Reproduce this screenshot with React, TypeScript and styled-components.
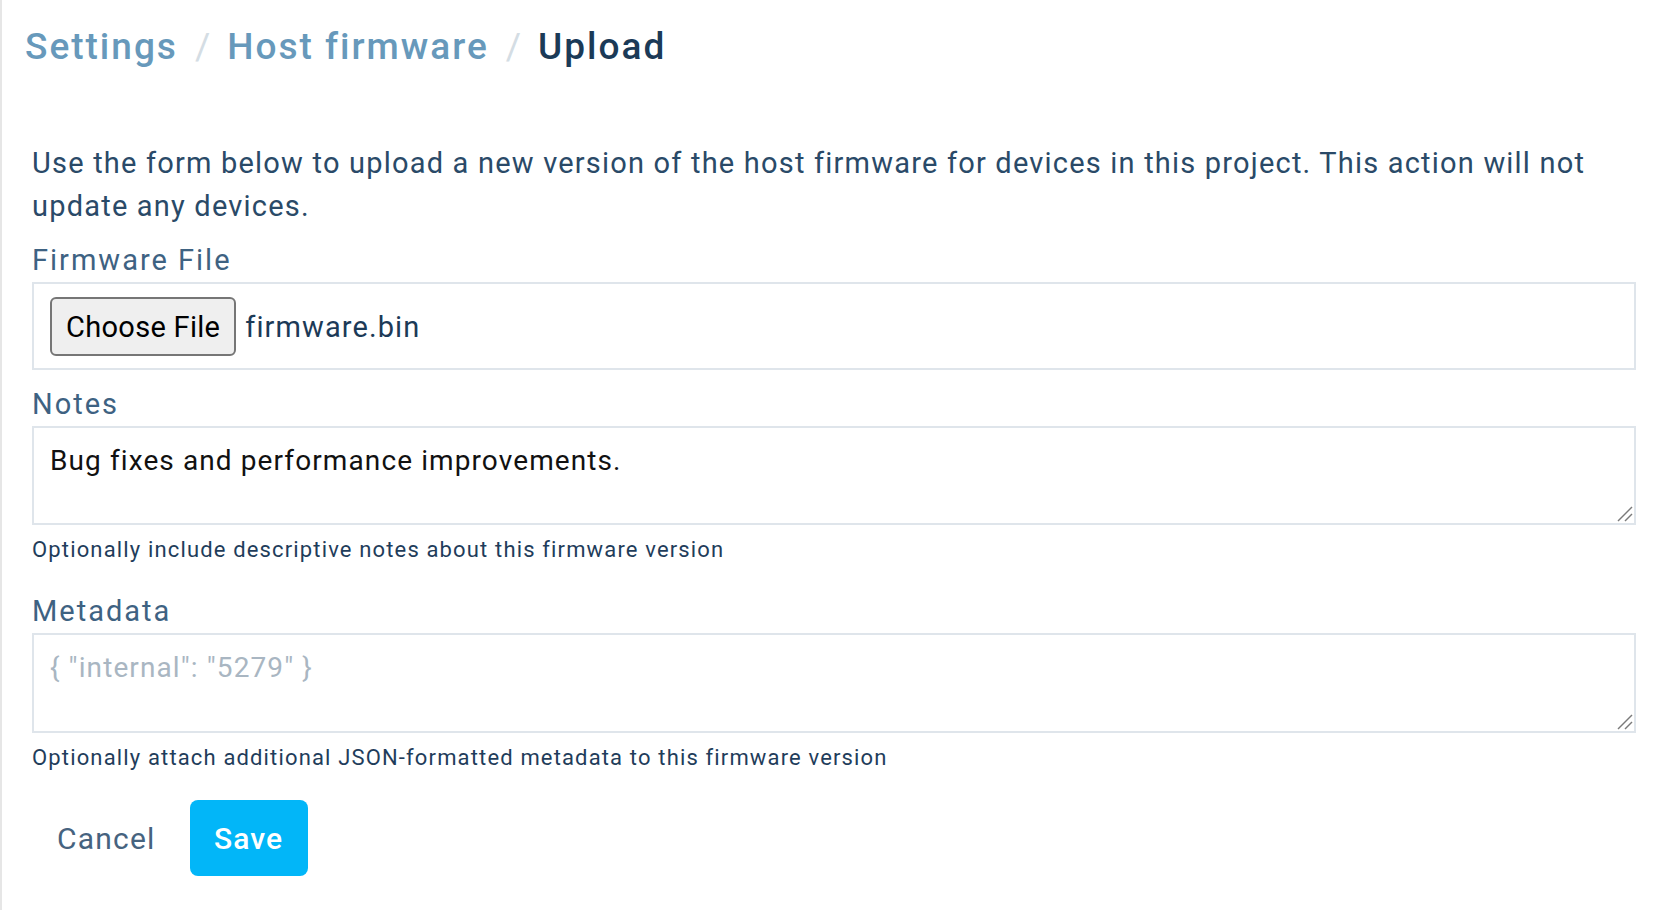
import React from "react";
import styled, { createGlobalStyle } from "styled-components";

const GlobalStyle = createGlobalStyle`
  html, body {
    margin: 0;
    padding: 0;
    background: #ffffff;
  }
  body {
    font-family: Roboto, "Liberation Sans", sans-serif;
    -webkit-font-smoothing: antialiased;
  }
  * { box-sizing: border-box; }
`;

const Page = styled.div`
  min-height: 100vh;
  border-left: 2px solid #e6e6e6;
`;

const Breadcrumb = styled.nav`
  display: flex;
  align-items: baseline;
  padding: 25px 24px 0 23px;
  font-size: 37px;
  line-height: 44px;
  font-weight: 500;
  letter-spacing: 2px;
`;

const Crumb = styled.span<{ $current?: boolean }>`
  color: ${(p) => (p.$current ? "#1b3a57" : "#6799bb")};
`;

const Slash = styled.span`
  color: #d4dde4;
  font-weight: 400;
  margin: 0 15px 0 17px;
`;

const Form = styled.form`
  display: flex;
  flex-direction: column;
  padding: 73px 20px 40px 30px;
`;

const Intro = styled.p`
  margin: 0 0 14px 0;
  font-size: 29px;
  line-height: 43px;
  color: #2a4a68;
  letter-spacing: 1.2px;
`;

const Field = styled.div<{ $gap?: number }>`
  display: flex;
  flex-direction: column;
  margin-top: ${(p) => p.$gap ?? 0}px;
`;

const Label = styled.label`
  display: block;
  font-size: 29px;
  line-height: 36px;
  color: #3e6282;
  letter-spacing: 2px;
  margin-bottom: 4px;
`;

const FileBox = styled.div`
  display: flex;
  align-items: center;
  gap: 9px;
  border: 2px solid #dfe5eb;
  padding: 13px 16px 12px 16px;
  background: #fff;
`;

const ChooseButton = styled.button`
  height: 59px;
  padding: 0 14px;
  border: 2px solid #767676;
  border-radius: 6px;
  background: #efefef;
  color: #000;
  font-family: Roboto, "Liberation Sans", sans-serif;
  font-size: 29px;
  letter-spacing: 0.3px;
`;

const FileName = styled.span`
  font-size: 29px;
  color: #1c3a57;
  letter-spacing: 1.1px;
`;

const AreaWrap = styled.div`
  position: relative;
  display: flex;
`;

const TextArea = styled.textarea<{ $h: number }>`
  width: 100%;
  height: ${(p) => p.$h}px;
  border: 2px solid #dfe5eb;
  padding: 12px 16px;
  font-family: Roboto, "Liberation Sans", sans-serif;
  font-size: 28px;
  line-height: 42px;
  letter-spacing: 1.1px;
  color: #111;
  resize: none;
  outline: none;
  background: #fff;
  &::placeholder {
    color: #a9b6c2;
  }
`;

const Grip = styled.svg`
  position: absolute;
  right: 3px;
  bottom: 3px;
  width: 16px;
  height: 16px;
  pointer-events: none;
`;

const Help = styled.div`
  margin-top: 10px;
  font-size: 22px;
  line-height: 30px;
  color: #1f3d5b;
  letter-spacing: 1.15px;
`;

const Actions = styled.div`
  display: flex;
  align-items: center;
  gap: 10px;
  margin-top: 27px;
`;

const CancelButton = styled.button`
  height: 76px;
  padding: 0 24px 0 25px;
  border: none;
  background: transparent;
  color: #46637f;
  font-family: Roboto, "Liberation Sans", sans-serif;
  font-size: 30px;
  letter-spacing: 1.2px;
  cursor: pointer;
`;

const SaveButton = styled.button`
  height: 76px;
  width: 118px;
  border: none;
  border-radius: 8px;
  background: #02b6f8;
  color: #fff;
  font-family: Roboto, "Liberation Sans", sans-serif;
  font-size: 30px;
  font-weight: 500;
  letter-spacing: 1px;
  cursor: pointer;
`;

const ResizeGrip = () => (
  <Grip viewBox="0 0 16 16">
    <line x1="1" y1="15" x2="15" y2="1" stroke="#7a7a7a" strokeWidth="1.4" />
    <line x1="8" y1="15" x2="15" y2="8" stroke="#7a7a7a" strokeWidth="1.4" />
  </Grip>
);

export default function App() {
  return (
    <>
      <GlobalStyle />
      <Page>
        <Breadcrumb>
          <Crumb>Settings</Crumb>
          <Slash>/</Slash>
          <Crumb>Host firmware</Crumb>
          <Slash>/</Slash>
          <Crumb $current>Upload</Crumb>
        </Breadcrumb>
        <Form onSubmit={(e) => e.preventDefault()}>
          <Intro>
            Use the form below to upload a new version of the host firmware for devices in this
            project. This action will not update any devices.
          </Intro>
          <Field>
            <Label>Firmware File</Label>
            <FileBox>
              <ChooseButton type="button">Choose File</ChooseButton>
              <FileName>firmware.bin</FileName>
            </FileBox>
          </Field>
          <Field $gap={16}>
            <Label>Notes</Label>
            <AreaWrap>
              <TextArea $h={99} readOnly defaultValue="Bug fixes and performance improvements." />
              <ResizeGrip />
            </AreaWrap>
            <Help>Optionally include descriptive notes about this firmware version</Help>
          </Field>
          <Field $gap={28}>
            <Label>Metadata</Label>
            <AreaWrap>
              <TextArea $h={100} placeholder={'{ "internal": "5279" }'} />
              <ResizeGrip />
            </AreaWrap>
            <Help>Optionally attach additional JSON-formatted metadata to this firmware version</Help>
          </Field>
          <Actions>
            <CancelButton type="button">Cancel</CancelButton>
            <SaveButton type="submit">Save</SaveButton>
          </Actions>
        </Form>
      </Page>
    </>
  );
}
